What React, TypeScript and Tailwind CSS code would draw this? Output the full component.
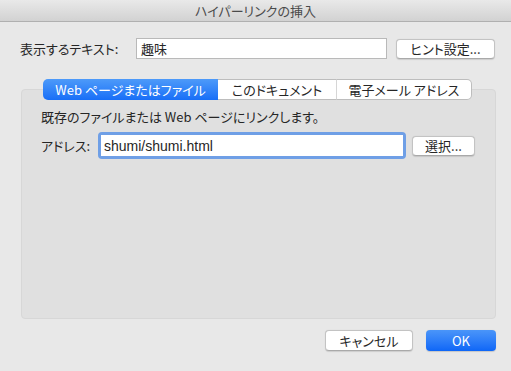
import React from "react";

const font =
  "[font-family:'Noto_Sans_CJK_JP','Noto_Sans',sans-serif] [font-feature-settings:'palt']";

function Btn({ children, className = "" }: { children: React.ReactNode; className?: string }) {
  return (
    <div
      className={`flex items-center justify-center bg-white border border-[#c3c3c3] border-b-[#a9a9a9] rounded-[4px] shadow-[0_0.5px_1px_rgba(0,0,0,0.12)] text-[13px] text-[#262626] ${className}`}
    >
      {children}
    </div>
  );
}

export default function App() {
  return (
    <div className={`w-[511px] h-[371px] bg-[#e8e8e8] flex flex-col text-[#262626] ${font}`}>
      {/* title bar */}
      <div className="h-[22px] shrink-0 flex items-center justify-center bg-gradient-to-b from-[#e9e9e9] to-[#d2d2d2] border-b border-[#b0b0b0] text-[13px] text-[#4a4a4a] leading-none">
        ハイパーリンクの挿入
      </div>

      {/* display text row */}
      <div className="mt-[16px] pl-[20px] flex items-center h-[21px]">
        <div className="w-[116px] text-[13px] leading-none">表示するテキスト:</div>
        <div className="w-[251px] h-[21px] bg-white border border-[#b9b9b9] flex items-center pl-[4px] text-[13px] leading-none">
          趣味
        </div>
        <Btn className="ml-[9px] w-[99px] h-[20px] leading-none">ヒント設定...</Btn>
      </div>

      {/* tabs */}
      <div className="mt-[20px] relative z-10 flex pl-[43px] h-[21px]">
        <div className="w-[175px] h-[21px] flex items-center justify-center rounded-l-[5px] bg-gradient-to-b from-[#4d9af9] to-[#176ef7] text-white text-[13px] leading-none">
          Web ページまたはファイル
        </div>
        <div className="w-[119px] h-[21px] flex items-center justify-center bg-white border-y border-[#bdbdbd] border-r border-r-[#d6d6d6] text-[13px] leading-none">
          このドキュメント
        </div>
        <div className="w-[135px] h-[21px] flex items-center justify-center bg-white border-y border-r border-[#bdbdbd] rounded-r-[5px] text-[13px] leading-none">
          電子メール アドレス
        </div>
      </div>

      {/* panel */}
      <div className="-mt-[11px] ml-[21px] w-[475px] h-[230px] bg-[#e0e0e0] border border-[#d7d7d7] rounded-[4px] flex flex-col pl-[19px] pt-[19px]">
        <div className="text-[13px] leading-[16px]">既存のファイルまたは Web ページにリンクします。</div>
        <div className="mt-[7px] flex items-center h-[27px]">
          <div className="w-[57px] text-[13px] leading-none">アドレス:</div>
          <div className="w-[308px] h-[27px] rounded-[4px] bg-[#6f9fe6] p-[3px]">
            <div className="w-full h-full bg-white flex items-center pl-[3px] text-[14px] leading-none [font-family:'Liberation_Sans',sans-serif]">
              shumi/shumi.html
            </div>
          </div>
          <Btn className="ml-[6px] w-[63px] h-[20px] leading-none">選択...</Btn>
        </div>
      </div>

      {/* bottom buttons */}
      <div className="mt-[11px] flex justify-end pr-[15px] gap-[13px]">
        <Btn className="w-[88px] h-[21px] leading-none">キャンセル</Btn>
        <div className="w-[70px] h-[21px] flex items-center justify-center rounded-[4px] bg-gradient-to-b from-[#4a95f9] to-[#0d66f7] text-white text-[13px] leading-none shadow-[0_0.5px_1px_rgba(0,0,0,0.15)]">
          OK
        </div>
      </div>
    </div>
  );
}
